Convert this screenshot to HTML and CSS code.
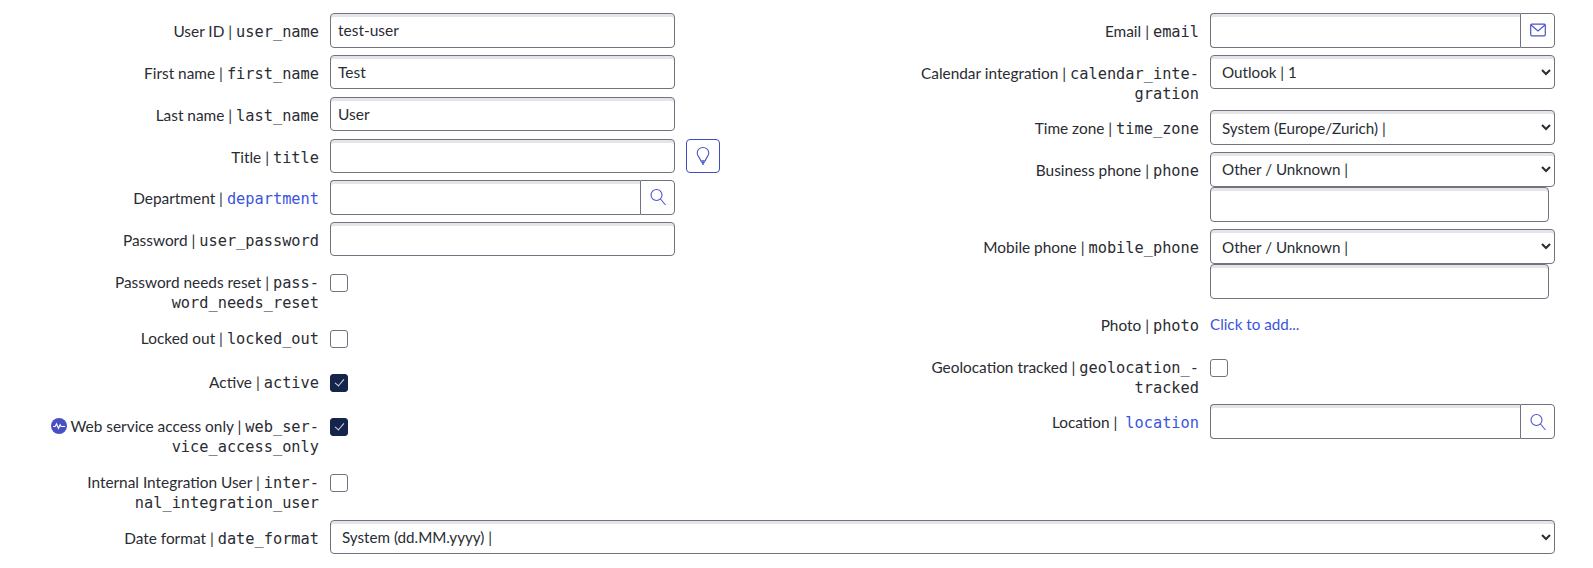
FILE: index.html
```html
<!DOCTYPE html>
<html>
  <head lang="en">
    <meta charset="UTF-8" />
    <title>User</title>
    <link rel="stylesheet" href="styles.css">
  </head>

  <body>
    <form id="content">
      <div class="col left">
        <div class="field">
          <label>User ID | <code>user_name</code></label>
          <input class="txt" type="text" value="test-user" />
        </div>
        <div class="field">
          <label>First name | <code>first_name</code></label>
          <input class="txt" type="text" value="Test" />
        </div>
        <div class="field">
          <label>Last name | <code>last_name</code></label>
          <input class="txt" type="text" value="User" />
        </div>
        <div class="field">
          <label>Title | <code>title</code></label>
          <input class="txt" type="text" />
          <button class="hint" type="button" title="Suggestion">
            <svg width="16" height="20" viewBox="0 0 16 20" fill="none" stroke="currentColor" stroke-width="1.1">
              <path d="M8 1.500C4.700 1.500 2.200 3.900 2.200 6.900c0 3 2.600 4.600 3.600 8h4.400c1-3.400 3.600-5 3.600-8 0-3-2.500-5.400-5.800-5.400z" />
              <path d="M6.200 16.200h3.600M7 18h2" stroke-width="1.500" />
            </svg>
          </button>
        </div>
        <div class="field">
          <label>Department | <code class="ref">department</code></label>
          <div class="group">
            <input class="txt" type="text" />
            <button class="addon" type="button">
              <svg width="18" height="20" viewBox="0 0 18 20" fill="none" stroke="currentColor" stroke-width="1.1">
                <circle cx="7.5" cy="8" r="5.5" />
                <path d="M11.5 12l5 6" />
              </svg>
            </button>
          </div>
        </div>
        <div class="field">
          <label>Password | <code>user_password</code></label>
          <input class="txt" type="password" />
        </div>
        <div class="field check">
          <label>Password needs reset | <code>pass-<br />word_needs_reset</code></label>
          <input class="box" type="checkbox" />
        </div>
        <div class="field check">
          <label>Locked out | <code>locked_out</code></label>
          <input class="box" type="checkbox" />
        </div>
        <div class="field check">
          <label>Active | <code>active</code></label>
          <input class="box" type="checkbox" checked />
        </div>
        <div class="field check">
          <label>
            <svg class="pulse" width="16" height="16" viewBox="0 0 16 16">
              <circle cx="8" cy="8" r="8" fill="#4a4fc4" />
              <path d="M2 8.500h2.200l1.300-2.600 2 4.400 1.600-3.600 1 1.800h4" fill="none" stroke="#fff" stroke-width="1.1" />
            </svg>
            Web service access only | <code>web_ser-<br />vice_access_only</code>
          </label>
          <input class="box" type="checkbox" checked />
        </div>
        <div class="field check">
          <label>Internal Integration User | <code>inter-<br />nal_integration_user</code></label>
          <input class="box" type="checkbox" />
        </div>
      </div>

      <div class="col right">
        <div class="field">
          <label>Email | <code>email</code></label>
          <div class="group">
            <input class="txt" type="text" />
            <button class="addon" type="button">
              <svg width="16" height="14" viewBox="0 0 16 14" fill="none" stroke="currentColor" stroke-width="1.2">
                <rect x="0.7" y="1.2" width="14.6" height="11.6" rx="1" />
                <path d="M1 2l7 6 7-6" />
              </svg>
            </button>
          </div>
        </div>
        <div class="field">
          <label>Calendar integration | <code>calendar_inte-<br />gration</code></label>
          <select class="sel"><option>Outlook | 1</option></select>
        </div>
        <div class="field">
          <label>Time zone | <code>time_zone</code></label>
          <select class="sel"><option>System (Europe/Zurich) |</option></select>
        </div>
        <div class="field">
          <label>Business phone | <code>phone</code></label>
          <div class="stack">
            <select class="sel"><option>Other / Unknown |</option></select>
            <input class="txt num" type="text" />
          </div>
        </div>
        <div class="field">
          <label>Mobile phone | <code>mobile_phone</code></label>
          <div class="stack">
            <select class="sel"><option>Other / Unknown |</option></select>
            <input class="txt num" type="text" />
          </div>
        </div>
        <div class="field photo">
          <label>Photo | <code>photo</code></label>
          <a class="add" href="#">Click to add...</a>
        </div>
        <div class="field check">
          <label>Geolocation tracked | <code>geolocation_-<br />tracked</code></label>
          <input class="box" type="checkbox" />
        </div>
        <div class="field">
          <label>Location | &nbsp;<code class="ref">location</code></label>
          <div class="group">
            <input class="txt" type="text" />
            <button class="addon" type="button">
              <svg width="18" height="20" viewBox="0 0 18 20" fill="none" stroke="currentColor" stroke-width="1.1">
                <circle cx="7.5" cy="8" r="5.5" />
                <path d="M11.5 12l5 6" />
              </svg>
            </button>
          </div>
        </div>
      </div>

      <div class="field wide">
        <label>Date format | <code>date_format</code></label>
        <select class="sel"><option>System (dd.MM.yyyy) |</option></select>
      </div>
    </form>
  </body>
</html>
```

FILE: styles.css
```css
body {
  margin: 0;
  padding: 0;
  background: #fff;
  color: #2a2c33;
  font-family: "Lato", "Liberation Sans", sans-serif;
  font-size: 15.4px;
}

#content {
  display: grid;
  grid-template-columns: 796px 797px;
  padding-top: 13.3px;
}

.field {
  display: grid;
  column-gap: 11px;
  align-items: start;
  margin-bottom: 7.35px;
}

.left .field {
  grid-template-columns: 319px 345px 34px;
}

.right .field {
  grid-template-columns: 403px 345px;
}

.field.wide {
  grid-column: 1 / 3;
  grid-template-columns: 319px 1225px;
}

label {
  display: block;
  padding-top: 8px;
  text-align: right;
  line-height: 20px;
}

code {
  font-family: "DejaVu Sans Mono", "Liberation Mono", monospace;
  font-size: 15.3px;
  line-height: 1;
}

code.ref {
  color: #3a55dc;
}

.check {
  min-height: 36.7px;
}

.left .check label {
  padding-bottom: 0.65px;
}

.photo {
  min-height: 35px;
}

.txt,
.sel {
  box-sizing: border-box;
  width: 100%;
  height: 34.4px;
  margin: 0;
  border: 1px solid #71737f;
  border-radius: 4px;
  background: #fff;
  box-shadow: inset 0 3px 0 #e4e5e8;
  color: #2a2c33;
  font-family: inherit;
}

.txt {
  padding: 0 7px;
  font-size: 15.5px;
}

.sel {
  padding: 0 7px;
  font-size: 15.2px;
}

.group {
  display: flex;
}

.group .txt {
  flex: 1;
  min-width: 0;
  border-right: 0;
  border-radius: 4px 0 0 4px;
}

.addon {
  display: flex;
  align-items: center;
  justify-content: center;
  width: 35px;
  height: 34.4px;
  padding: 0;
  border: 1px solid #71737f;
  border-radius: 0 4px 4px 0;
  background: #fff;
  color: #4a55c8;
}

.hint {
  display: flex;
  align-items: center;
  justify-content: center;
  width: 34px;
  height: 34.4px;
  padding: 0;
  border: 1px solid #3f4fc0;
  border-radius: 4px;
  background: #fff;
  color: #4a55c8;
}

.stack .num {
  display: block;
  width: 339px;
  height: 35px;
  margin-top: 0.6px;
}

.box {
  appearance: none;
  position: relative;
  box-sizing: border-box;
  width: 18px;
  height: 18px;
  margin: 10px 0 0;
  border: 1px solid #71737f;
  border-radius: 3px;
  background: #fff;
}

.box:checked {
  border-color: #14244a;
  background: #14244a;
}

.box:checked::after {
  content: "";
  position: absolute;
  left: 5.5px;
  top: 2.5px;
  width: 4px;
  height: 8px;
  border-right: 1px solid #d5d9e4;
  border-bottom: 1px solid #d5d9e4;
  transform: rotate(40deg);
}

.pulse {
  vertical-align: -2px;
}

.add {
  display: block;
  padding-top: 7px;
  line-height: 20px;
  font-size: 15.2px;
  color: #3a55dc;
  text-decoration: none;
}
```
